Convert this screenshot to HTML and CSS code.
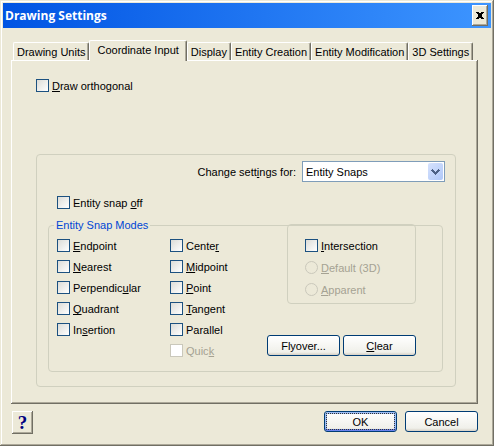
FILE: index.html
```
<!DOCTYPE html>
<html lang="en">
<head>
    <meta charset="UTF-8">
    <title>Drawing Settings</title>
    <link rel="stylesheet" href="styles.css">
</head>
<body>
<form class="dialog">
    <header class="titlebar">
        <h1>Drawing Settings</h1>
        <button type="button" class="close" aria-label="Close">
            <svg width="8" height="7" viewBox="0 0 8 7" shape-rendering="crispEdges"><path d="M0 0h3v1h2v-1h3v1h-1v1h-1v3h1v1h1v1h-3v-1h-2v1h-3v-1h1v-1h1v-3h-1v-1h-1z"/></svg>
        </button>
    </header>

    <main>
        <div class="tabs" role="tablist">
            <button type="button" role="tab" class="tab">Drawing Units</button>
            <button type="button" role="tab" class="tab active" aria-selected="true">Coordinate Input</button>
            <button type="button" role="tab" class="tab">Display</button>
            <button type="button" role="tab" class="tab">Entity Creation</button>
            <button type="button" role="tab" class="tab">Entity Modification</button>
            <button type="button" role="tab" class="tab">3D Settings</button>
        </div>

        <section class="panel" role="tabpanel">
            <label class="check"><input type="checkbox"><span><u>D</u>raw orthogonal</span></label>

            <div class="group settings">
                <div class="change">
                    <label for="target">Change sett<u>i</u>ngs for:</label>
                    <div class="combo">
                        <select id="target">
                            <option>Entity Snaps</option>
                        </select>
                        <span class="arrow">
                            <svg width="9" height="6" viewBox="0 0 9 6" shape-rendering="crispEdges"><path fill="#4d6185" d="M1 0h1v1h1v1h1v1h1v-1h1v-1h1v-1h1v1h1v1h-1v1h-1v1h-1v1h-1v1h-1v-1h-1v-1h-1v-1h-1v-1h-1v-1h1z"/></svg>
                        </span>
                    </div>
                </div>

                <label class="check snap-off"><input type="checkbox"><span>Entity snap <u>o</u>ff</span></label>

                <fieldset class="group modes">
                    <legend>Entity Snap Modes</legend>
                    <div class="column">
                        <label class="check"><input type="checkbox"><span><u>E</u>ndpoint</span></label>
                        <label class="check"><input type="checkbox"><span><u>N</u>earest</span></label>
                        <label class="check"><input type="checkbox"><span>Perpendic<u>u</u>lar</span></label>
                        <label class="check"><input type="checkbox"><span><u>Q</u>uadrant</span></label>
                        <label class="check"><input type="checkbox"><span>In<u>s</u>ertion</span></label>
                    </div>
                    <div class="column">
                        <label class="check"><input type="checkbox"><span>Cente<u>r</u></span></label>
                        <label class="check"><input type="checkbox"><span><u>M</u>idpoint</span></label>
                        <label class="check"><input type="checkbox"><span><u>P</u>oint</span></label>
                        <label class="check"><input type="checkbox"><span><u>T</u>angent</span></label>
                        <label class="check"><input type="checkbox"><span>Parallel</span></label>
                        <label class="check off"><input type="checkbox" disabled><span>Quic<u>k</u></span></label>
                    </div>
                    <div class="side">
                        <div class="group intersection">
                            <label class="check"><input type="checkbox"><span><u>I</u>ntersection</span></label>
                            <label class="check off"><input type="radio" name="kind" disabled><span><u>D</u>efault (3D)</span></label>
                            <label class="check off"><input type="radio" name="kind" disabled><span><u>A</u>pparent</span></label>
                        </div>
                        <div class="actions">
                            <button type="button" class="btn">Flyover...</button>
                            <button type="button" class="btn"><u>C</u>lear</button>
                        </div>
                    </div>
                </fieldset>
            </div>
        </section>
    </main>

    <footer>
        <button type="button" class="help">?</button>
        <button type="submit" class="btn default">OK</button>
        <button type="button" class="btn">Cancel</button>
    </footer>
</form>
</body>
</html>
```
FILE: styles.css
```
* {
    box-sizing: border-box;
}
body {
    margin: 0;
    background: #ece9d8;
}
body,
button,
select {
    font-family: "Liberation Sans", Arial, sans-serif;
    font-size: 11px;
    line-height: 14px;
    color: #000;
}
button {
    padding: 0;
    border: 0;
}
u {
    text-underline-offset: 1px;
    text-decoration-skip-ink: none;
}
svg {
    display: block;
}
.dialog {
    display: flex;
    flex-direction: column;
    min-height: 100vh;
    padding: 3px;
    box-shadow: inset -1px -1px #716f64, inset 1px 1px #ece9d8, inset -2px -2px #aca899, inset 2px 2px #fff;
}

/* title bar */
.titlebar {
    display: flex;
    align-items: center;
    justify-content: space-between;
    height: 25px;
    padding: 0 3px 0 2px;
    background: linear-gradient(to right, #0054e3, #3d95ff);
}
h1 {
    margin: 0;
    font: bold 12px/18px "Open Sans", sans-serif;
    color: #fff;
}
.close,
.help {
    display: flex;
    align-items: center;
    justify-content: center;
    background: #ece9d8;
    box-shadow: inset -1px -1px #716f64, inset 1px 1px #fff, inset -2px -2px #aca899;
}
.close {
    width: 16px;
    height: 21px;
}

/* tabs */
main {
    display: flex;
    flex: 1;
    flex-direction: column;
    padding: 12px 13px 7px 8px;
}
.tabs {
    display: flex;
    align-items: flex-end;
    height: 20px;
    padding-left: 2px;
}
.tab {
    height: 18px;
    padding: 0 3px;
    background: #ece9d8;
    border-top: 1px solid #fff;
    border-left: 1px solid #fff;
    border-right: 1px solid #716f64;
    border-radius: 2px 2px 0 0;
    box-shadow: inset -1px 0 #aca899;
    white-space: nowrap;
}
.tab.active {
    height: 21px;
    margin-bottom: -1px;
    padding: 0 7px 3px;
    z-index: 1;
}
.panel {
    flex: 1;
    padding: 19px 22px 17px 25px;
    box-shadow: inset -1px -1px #716f64, inset 1px 1px #fff, inset -2px -2px #aca899;
}

/* check boxes and radios */
.check {
    display: flex;
    align-items: center;
    gap: 3px;
    height: 13px;
    white-space: nowrap;
}
.check input {
    flex: none;
    appearance: none;
    width: 13px;
    height: 13px;
    margin: 0;
    border: 1px solid #1c5180;
    background: linear-gradient(135deg, #dcdcd7, #fff);
}
.check input:disabled {
    border-color: #cac8bb;
    background: #fff;
}
.check input[type=radio]:disabled {
    border-radius: 50%;
    background: none;
}
.off {
    color: #a5a293;
}

/* groups */
.group {
    border: 1px solid #d0d0bf;
    border-radius: 4px;
}
.settings {
    margin-top: 62px;
    padding: 6px 12px 14px 11px;
}
.change {
    display: flex;
    align-items: center;
    justify-content: flex-end;
    gap: 6px;
    margin-right: -2px;
}
.combo {
    position: relative;
    width: 143px;
}
.combo select {
    display: block;
    appearance: none;
    width: 100%;
    height: 21px;
    padding: 0 3px;
    border: 1px solid #7f9db9;
    border-radius: 0;
    background: #fff;
}
.arrow {
    position: absolute;
    top: 2px;
    right: 2px;
    display: flex;
    align-items: center;
    justify-content: center;
    width: 15px;
    height: 17px;
    border-radius: 2px;
    background: linear-gradient(135deg, #d6e2fd, #b0c8f8);
    pointer-events: none;
}
.snap-off {
    margin: 14px 0 9px 9px;
}
.modes {
    display: grid;
    grid-template-columns: 113px 117px 1fr;
    min-width: 0;
    margin: 0;
    padding: 7px 26px 14px 8px;
}
.modes legend {
    margin-left: -3px;
    padding: 0 2px;
    color: #0046d5;
}
.column {
    display: flex;
    flex-direction: column;
    gap: 8px;
}
.intersection {
    display: flex;
    flex-direction: column;
    gap: 9px;
    height: 80px;
    margin-top: -15px;
    padding: 14px 17px;
}
.actions {
    display: flex;
    justify-content: flex-end;
    gap: 3px;
    margin: 31px 0 0 -21px;
}

/* buttons */
.btn {
    width: 73px;
    height: 21px;
    border: 1px solid #003c74;
    border-radius: 3px;
    background: linear-gradient(#fff, #f0f0ea 85%, #d6d0c5);
}
.btn.default {
    box-shadow: inset 0 -2px #6982ee, inset 0 0 0 2px #9ebef5;
    outline: 1px dotted #333;
    outline-offset: -3px;
}
footer {
    display: flex;
    gap: 8px;
    padding: 0 13px 9px 9px;
}
.help {
    width: 21px;
    height: 23px;
    margin-right: auto;
    font: bold 19px/20px "Liberation Serif", serif;
    color: #000080;
}
```
